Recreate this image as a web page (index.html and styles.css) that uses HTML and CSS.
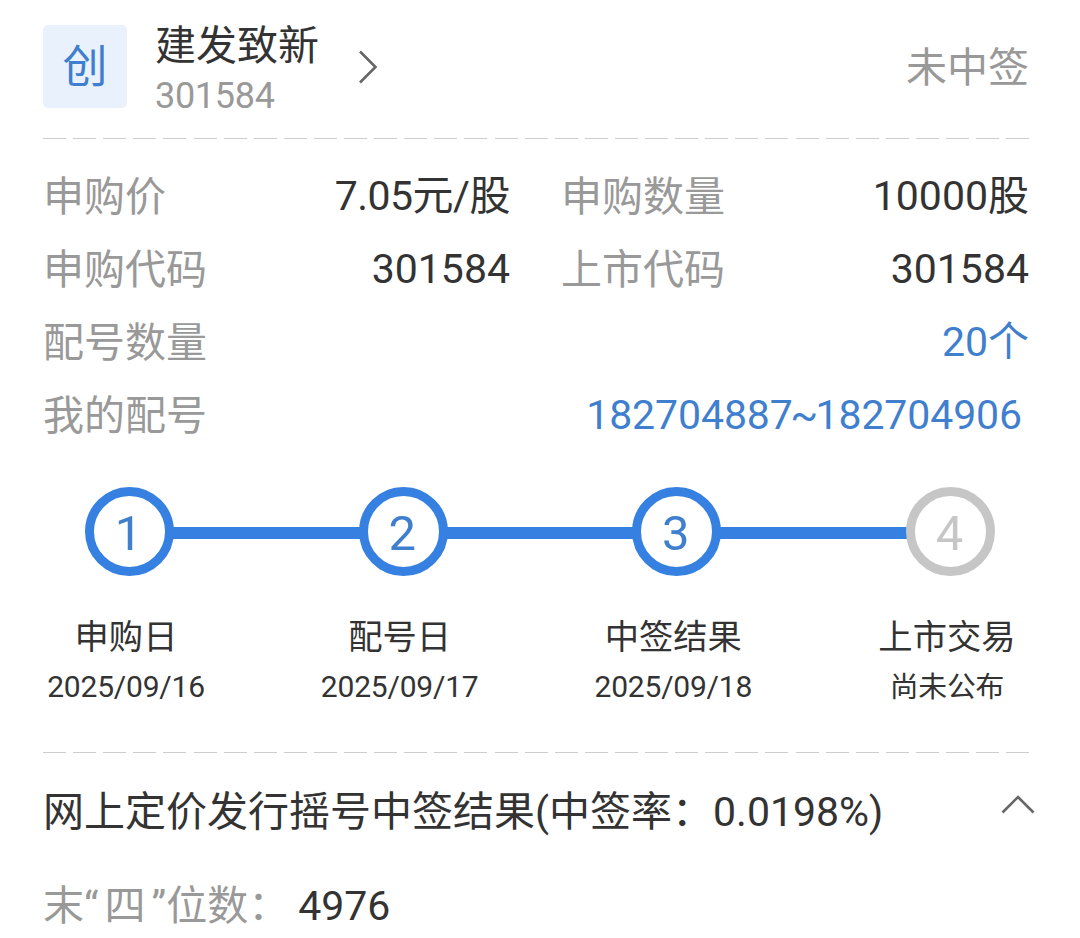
FILE: index.html
```html
<!DOCTYPE html>
<html lang="zh-CN">
<head>
    <meta charset="UTF-8">
    <meta name="viewport" content="width=device-width, initial-scale=1.0">
    <title>建发致新</title>
    <link rel="stylesheet" href="styles.css">
</head>
<body>
    <div class="container">
        <div class="header">
            <div class="badge">创</div>
            <div class="stock">
                <div class="stockName">建发致新</div>
                <div class="stockCode">301584</div>
            </div>
            <svg class="arrowRight" width="20" height="34" viewBox="0 0 20 34">
                <path d="M2 1.5L17.5 17L2 32.5" fill="none" stroke="#666" stroke-width="2.6"/>
            </svg>
            <div class="status">未中签</div>
        </div>
        <div class="dashed"></div>

        <div class="info">
            <div class="item"><span class="label">申购价</span><span class="value price">7.05元/股</span></div>
            <div class="item"><span class="label">申购数量</span><span class="value">10000股</span></div>
            <div class="item"><span class="label">申购代码</span><span class="value">301584</span></div>
            <div class="item"><span class="label">上市代码</span><span class="value">301584</span></div>
            <div class="item wide"><span class="label">配号数量</span><span class="value link">20个</span></div>
            <div class="item wide"><span class="label">我的配号</span><span class="value link range">182704887<span class="tilde">~</span>182704906</span></div>
        </div>

        <div class="steps">
            <div class="circle">1</div>
            <div class="line"></div>
            <div class="circle">2</div>
            <div class="line"></div>
            <div class="circle">3</div>
            <div class="line"></div>
            <div class="circle gray">4</div>
        </div>
        <div class="stepTexts">
            <div class="stepText"><div class="stepName">申购日</div><div class="stepDate">2025/09/16</div></div>
            <div class="stepText"><div class="stepName">配号日</div><div class="stepDate">2025/09/17</div></div>
            <div class="stepText"><div class="stepName">中签结果</div><div class="stepDate">2025/09/18</div></div>
            <div class="stepText"><div class="stepName">上市交易</div><div class="stepDate pending">尚未公布</div></div>
        </div>
        <div class="dashed"></div>

        <div class="resultTitle">
            <span>网上定价发行摇号中签结果(中签率：0.0198%)</span>
            <svg class="arrowUp" width="34" height="20" viewBox="0 0 34 20">
                <path d="M1.5 17.5L17 2L32.5 17.5" fill="none" stroke="#666" stroke-width="2.6"/>
            </svg>
        </div>
        <div class="resultRow">
            <span class="label">末<span class="quoteLeft">“</span>四<span class="quoteRight">”</span>位数：</span>
            <span class="number">4976</span>
        </div>
    </div>
</body>
</html>
```

FILE: styles.css
```css
body{
    margin: 0px;
    background-color: #fff;
    color: #333;
    font-family: Roboto, "Noto Sans CJK SC", sans-serif;
    font-size: 41px;
}
.container{
    box-sizing: border-box;
    width: 1080px;
    height: 938px;
    padding: 0px 51px 0px 43px;
    overflow: hidden;
}
.header{
    display: flex;
    height: 138px;
}
.badge{
    width: 84px;
    height: 83px;
    margin-top: 25px;
    border-radius: 5px;
    background-color: #e9f2fc;
    color: #3f7fce;
    font-size: 45px;
    line-height: 86px;
    text-align: center;
}
.stock{
    width: 203px;
    margin-left: 28px;
    padding-top: 20px;
}
.stockName{
    line-height: 52px;
}
.stockCode{
    color: #999;
    font-size: 36px;
    letter-spacing: -0.3px;
    line-height: 48px;
}
.arrowRight{
    margin-top: 50px;
}
.status{
    margin-left: auto;
    padding-top: 42px;
    color: #999;
    line-height: 52px;
}
.dashed{
    height: 1px;
    background: repeating-linear-gradient(to right, #ccc 0px 23px, transparent 23px 30.1px);
}
.info{
    display: grid;
    grid-template-columns: 467px 468px;
    column-gap: 51px;
    grid-auto-rows: 73px;
    padding-top: 21px;
}
.item{
    display: flex;
    justify-content: space-between;
    line-height: 73px;
}
.wide{
    grid-column: 1 / 3;
}
.label{
    padding-top: 1px;
    color: #999;
}
.price{
    letter-spacing: -0.5px;
}
.link{
    color: #3f7fce;
}
.range{
    padding-right: 7px;
    letter-spacing: -0.1px;
}
.tilde{
    margin: 0px -2.5px;
}
.steps{
    display: flex;
    align-items: center;
    width: 910px;
    margin: 35px 0px 0px 42px;
}
.circle{
    box-sizing: border-box;
    width: 89px;
    height: 89px;
    padding-right: 2px;
    border: 9px solid #3580e0;
    border-radius: 50%;
    color: #3f7fce;
    font-size: 49px;
    line-height: 75px;
    text-align: center;
}
.gray{
    border-color: #c6c6c6;
    color: #c6c6c6;
}
.line{
    flex: 1;
    height: 12px;
    margin: 3px -2px 0px;
    background-color: #3580e0;
}
.stepTexts{
    display: flex;
    justify-content: space-between;
    width: 981px;
    height: 176px;
    margin-left: 3px;
}
.stepText{
    width: 160px;
    padding-top: 35px;
    text-align: center;
}
.stepName{
    font-size: 34.3px;
    line-height: 52px;
}
.stepDate{
    font-size: 30px;
    letter-spacing: -0.2px;
    line-height: 48px;
}
.pending{
    font-size: 28.8px;
}
.resultTitle{
    display: flex;
    justify-content: space-between;
    margin-right: -6px;
    padding-top: 23px;
    line-height: 73px;
}
.arrowUp{
    margin-top: 19px;
}
.resultRow{
    display: flex;
    padding-top: 20px;
    line-height: 73px;
}
.quoteLeft{
    margin-right: 6px;
}
.quoteRight{
    margin-left: 6px;
}
.number{
    margin-left: 9px;
    padding-top: 1px;
}
```
